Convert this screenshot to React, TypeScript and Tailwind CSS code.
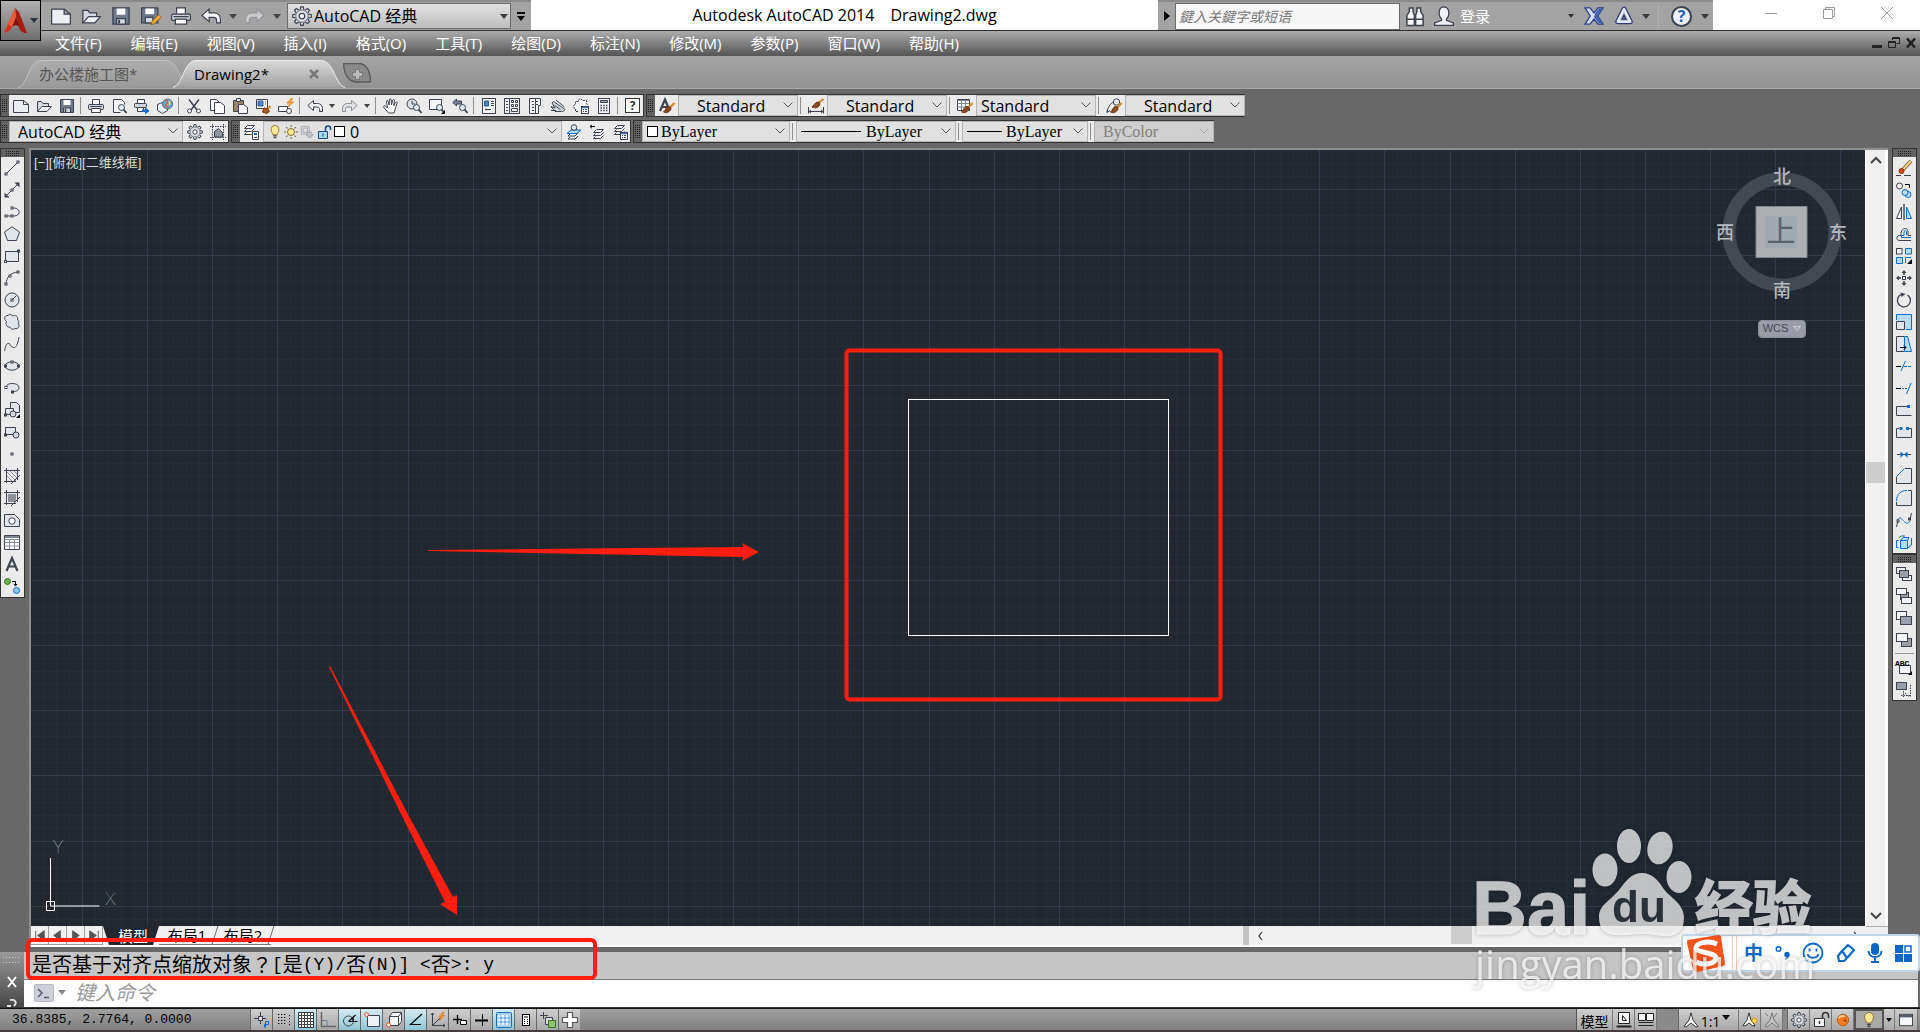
import React from 'react'

const INK = '#3c4250'
const BLUE = '#0a6ccf'
const SKY = '#b4dcf2'
const PALE = '#e2e5ea'

const node = (x: number, y: number) => <rect x={x - 1} y={y - 1} width="2" height="2" fill="#fff" />

const page = (x: number, y: number, w: number, h: number, fill = '#f4f5f7', stroke = INK) => (
  <rect x={x} y={y} width={w} height={h} fill={fill} stroke={stroke} />
)

const lens = (
  <>
    <circle cx="10.5" cy="9.5" r="3" fill="#dcebf2" />
    <path d="M12.7 11.7 15.5 15" strokeWidth="1.8" />
  </>
)

const brush = (
  <>
    <path d="M15.5 5 11 9.5" stroke="#d68a2e" strokeWidth="2.4" />
    <path d="M11.5 9 9 8.5C7 9.5 6.5 12.5 4.5 14c2.5 1.5 6 .5 7.5-3z" fill="#8a4a20" stroke="#6d3512" />
  </>
)

const layers = (x: number, y: number) => (
  <path d={`M${x + 3} ${y}h7l-3 3h-7zM${x + 2} ${y + 4}l-2 2h7l3-3M${x + 2} ${y + 7}l-2 2h7l3-3`} fill="#f4f5f7" />
)

const miniTable = (
  <>
    <rect x="8.5" y="8.5" width="7" height="7" fill="#fff" />
    <path d="M9 9.5h6" stroke="#3f6fb0" strokeWidth="1.5" />
    <path d="M10 11.5h1M12 11.5h2M10 13.5h1M12 13.5h2" />
  </>
)

const spokes = [0, 45, 90, 135, 180, 225, 270, 315]

const icons: Record<string, React.ReactNode> = {
  new: <path d="M.5 2.5h10l5 4v8H.5zM10.5 2.5v4h5" fill="#eceef1" />,
  open: (
    <>
      <path d="M1.5 13.5V3.5h4l1.5 2h5.5v3" fill="#d5d9e0" />
      <path d="M1.5 13.5 6 8.5h9.5l-4.500 5z" fill="#f2f4f6" />
    </>
  ),
  save: (
    <>
      <path d="M1.5 1.5h13v13h-13z" fill="#6f7a8c" />
      <path d="M4.5 2h7v5h-7z" fill="#fff" stroke="none" />
      <path d="M4.5 10h7v4.5h-7z" fill="#d5d9e0" />
      <path d="M6.5 11v3" strokeWidth="1.5" />
    </>
  ),
  saveas: (
    <>
      <path d="M.5 1.5h13v12H.5z" fill="#6f7a8c" />
      <path d="M3.5 2h7v4.5h-7z" fill="#fff" stroke="none" />
      <path d="M3.5 9h6v4.5h-6z" fill="#d5d9e0" />
      <path d="m8 15 1-3 5-5 2 2-5 5z" fill="#f2ac3c" stroke="#8a5a18" strokeWidth=".7" />
    </>
  ),
  print: (
    <>
      <path d="M4.5 6V1.5h7V6" fill="#fff" />
      <rect x=".5" y="6.5" width="15" height="5" rx="1" fill="#cfd3da" />
      <path d="M3.5 10.5h9v4h-9z" fill="#fff" />
      <path d="M2 8.5h12" />
    </>
  ),
  preview: <><path d="M9.5 14.5h-7v-13h8l3 3v2" fill="#fff" />{lens}</>,
  publish: (
    <>
      <path d="M3.5 5V1.5h7V5" fill="#fff" />
      <rect x=".5" y="5.5" width="12" height="4" rx="1" fill="#cfd3da" />
      <path d="M3.5 9.5h6v4h-6z" fill="#fff" />
      <path d="M8 11.5h3V9l4.5 4-4.5 3.500V14H8z" fill={BLUE} stroke="none" />
    </>
  ),
  globe: (
    <>
      <path d="m.5 6.5 5-2 5 2v6l-5 3-5-3z" fill="#f4f5f7" />
      <circle cx="10.5" cy="6" r="5" fill="#58b4e8" stroke="#5a6475" />
      <path d="M8 3c2-1.5 3 0 2.5 1.5S8 6 8.5 8c1 1 2.5 0 3 1.5" stroke="#e8582c" strokeWidth="1.5" />
      <path d="M12.5 3v4" stroke="#ffd23c" strokeWidth="1.8" />
    </>
  ),
  cut: (
    <>
      <path d="M3 1.5 11 12M13 1.5 5 12" strokeWidth="1.5" />
      <circle cx="3.5" cy="13" r="2" fill="#fff" />
      <circle cx="12.5" cy="13" r="2" fill="#fff" />
    </>
  ),
  copy: (
    <>
      <path d="M1.5 1.5h6l3 3v8h-9z" fill="#fff" />
      <path d="M5.5 4.5h6l4 3v8h-10z" fill="#fff" />
    </>
  ),
  paste: (
    <>
      <path d="M1.5 2.5h10v11h-10z" fill="#9a8468" />
      <path d="M4.5.5h4v3h-4z" fill="#e2e5ea" />
      <path d="M6.5 6.5h5l4 3v6h-9z" fill="#fff" />
    </>
  ),
  match: (
    <>
      <path d="M1.5 1.5h11v9h-11z" fill="#fff" />
      <path d="M3 3h5v5H3z" fill="#4c86c8" stroke="#2b5f9a" />
      <path d="M10 4h1M10 6h1" />
      <path d="m15.5 8-3 3" stroke="#d68a2e" strokeWidth="2" />
      <path d="M12.5 10.5 9 10l-1.5 4 4 1.5 3-2z" fill="#a85c20" stroke="#6d3512" />
    </>
  ),
  block: (
    <>
      <path d="M.5 8.5h9v5h-9z" fill="#fff" />
      <circle cx="11" cy="13" r="2.5" fill="#fff" />
      <path d="m13 .5-4 4.500h3l-2 4 5.500-5h-3l2-3.500z" fill="#ffb52e" stroke="#d87010" strokeWidth=".7" />
    </>
  ),
  undo: <path d="M.8 7.5 6.5 2.5v3h4c3 0 5 2 5 5v3h-3v-2c0-2-1-2.5-2.5-2.5H6.5v3.500z" fill="#f4f5f7" />,
  redo: <path d="M15.2 7.5 9.5 2.5v3h-4c-3 0-5 2-5 5v3h3v-2c0-2 1-2.5 2.5-2.5h3.500v3.500z" fill="#e2e4e7" stroke="#888c94" />,
  pan: <path d="M5.5 15 1 9.5c-1-1.5.5-2.5 1.500-1.500l2 2-1-6.500c0-1.500 1.500-1.500 1.700 0L6.200 7 6.400 2c0-1.600 1.700-1.600 1.800 0l.3 4.800 1.200-4.500c.5-1.300 2-.9 1.700.5l-.7 5 1.800-3.300c.8-1 2-.3 1.600.8L12 11.500l-1 3.500z" fill="#fff" />,
  zoomrt: <><circle cx="6" cy="6" r="5" fill="#dce1e8" /><path d="M6 3v3h3" />{lens}</>,
  zoomwin: <><path d="M.5 1.5h12v10H.5z" fill="#f4f5f7" />{lens}<path d="M16 12v4h-4z" fill="#000" stroke="none" /></>,
  zoomprev: <><path d="M.8 4.5 4.5 1v2h5v3h-5v2z" fill="#7d8694" />{lens}</>,
  props: (
    <>
      {page(1.5, 0.5, 13, 15)}
      <path d="M3.5 3h4v5h-4z" fill="#3f86cc" stroke="#2b5f9a" />
      <path d="M10 3.5h3M10 5.5h3M10 7.5h3M4 11.5h6M5 10.5v2" />
    </>
  ),
  design: (
    <>
      {page(0.5, 0.5, 15, 15)}
      <path d="M5.5 1v14M2 3.5h2M2 6.5h2M2 9.5h2M2 12.5h2" />
      <path d="M7.5 2.5h2v2h-2zM11.5 2.5h2v2h-2zM7.5 6.5h2v2h-2zM11.5 6.5h2v2h-2zM7.5 10.5h6v3h-6z" />
    </>
  ),
  palette: (
    <>
      <path d="M2.5.5h11v7h-2v8h-9z" fill="#f4f5f7" />
      <path d="M5 3.5h2M9 3.5h2M5 6.5h2M9 6.5h2M5 9.5h2M5 12.5h2M8.5 1v14" />
    </>
  ),
  sheet: (
    <>
      <path d="M1 8.500 5 10 2 5l1.500-1.500L14.500 11c1 1-1 2.500-3 2.500H5z" fill="#d5d9e0" />
      <path d="m6 2 8.500 7M1 12.500h5M4.500 7.500l6 4" />
    </>
  ),
  markup: (
    <>
      <path d="M5 13.5H2.5v-3a2 2 0 0 1 0-4v-3h3a2 2 0 0 1 4-1h4v3a2 2 0 0 1 1 2" strokeDasharray="2 1" fill="#f4f5f7" />
      {miniTable}
    </>
  ),
  calc: (
    <>
      {page(2.5, 0.5, 11, 15)}
      <path d="M4.5 2.5h7v2h-7z" fill="#9ba3b0" />
      <path d="M4.5 7.5h7M4.5 10h7M4.5 12.5h7" strokeDasharray="1.5 1.2" strokeWidth="1.5" />
    </>
  ),
  textstyle: <><path d="M1 13 6 1.5 10 11M2.8 9h6" strokeWidth="2.2" />{brush}</>,
  dimstyle: (
    <>
      <path d="M.5 9v6.5M15.5 9v6.5M1 13.5h14M3 12l-2 1.5 2 1.5M13 12l2 1.5-2 1.5" />
      <path d="m15.5 1-5 4" stroke="#d68a2e" strokeWidth="2" />
      <path d="M11 4 8 4.5 4 9c3 1.5 7 1 8-3z" fill="#8a4a20" stroke="#6d3512" />
    </>
  ),
  tablestyle: <><path d="M.5 1.5h12v11H.5z" fill="#fff" /><path d="M.5 2.5h12M.5 5.5h12M.5 9h12M4.5 3v9M8.5 3v9" stroke="#7d8694" />{brush}</>,
  leaderstyle: <><path d="M1 14.5C2 9 4 6 7.5 4M1 14.5 1.5 11M1 14.5l3-2" /><circle cx="10.5" cy="4" r="3.2" fill="#e8ecf2" />{brush}</>,
  gear: (
    <>
      {spokes.map((a) => (
        <path key={a} d="M6.5 3 7 .6h2L9.5 3" fill="#dfe2e8" transform={`rotate(${a} 8 8)`} />
      ))}
      <circle cx="8" cy="8" r="5" fill="#dfe2e8" stroke="#7d8592" />
      <circle cx="8" cy="8" r="2.2" fill="#fff" />
    </>
  ),
  workspace: (
    <>
      <path d="M2.5 0v16M13.5 0v16M0 2.5h16M0 13.5h16" strokeDasharray="1.5 1" />
      <path d="M4.5 13V7.5l4-3 4 4V13z" fill="#8d95a2" />
    </>
  ),
  layerprops: <>{layers(0.5, 1.5)}<path d="M8.5 7.5h6v8h-6z" fill="#fff" /><path d="M10 10h3" stroke={BLUE} strokeWidth="2" /><path d="M10 13.5h3" /></>,
  bulb: (
    <>
      <path d="M5.5 11C5.5 9 3.5 8 3.5 5a4.500 4.500 0 0 1 9 0c0 3-2 4-2 6z" fill="#ffe794" stroke="#8b7338" />
      <path d="M6 12.5h4M6.5 14.5h3" stroke="#444" strokeWidth="1.5" />
    </>
  ),
  sun: (
    <g stroke="#7a6a3c">
      <circle cx="8" cy="8" r="3.5" fill="#ffe48a" />
      {spokes.map((a) => (
        <path key={a} d="M8 3V1" transform={`rotate(${a} 8 8)`} />
      ))}
    </g>
  ),
  freeze: (
    <g stroke="#a4a6aa">
      <path d="M1.5 1.5h9v9h-9zM3.5 3.5h5v5h-5z" />
      <circle cx="11" cy="11" r="3" fill="#c4c6ca" strokeDasharray="1.5 1" strokeWidth="2" />
    </g>
  ),
  unlock: (
    <>
      <path d="M9.5 7V4.5a2.5 2.5 0 0 1 5 0V6" stroke="#1d4e7a" strokeWidth="1.5" />
      <path d="M2.5 7.5h9v7h-9z" fill="#a6d8f2" stroke="#1d4e7a" />
      <path d="M7 9.5v3" stroke="#1d4e7a" />
    </>
  ),
  layermake: (
    <>
      {layers(2, 6)}
      <path d="M5 6h10l-4 3.500H1z" fill={SKY} stroke={BLUE} />
      <circle cx="8" cy="3.5" r="2.800" fill="#dfe4ea" />
    </>
  ),
  layerprev: <>{layers(4.5, 5.5)}<path d="M1 2.5h5M3 .8 1 2.5l2 1.8" stroke="#000" /></>,
  layerstate: <>{layers(2.5, 1.5)}{miniTable}</>,
  line: <><path d="M2 14 14 2" />{node(2, 14)}{node(14, 2)}</>,
  xline: <><path d="M2 14 14 2" /><path d="M15.500.5v5l-5-5zM.5 15.5v-5l5 5z" fill={INK} stroke="none" />{node(8, 8)}</>,
  pline: <><path d="M2 12h8c7 0 7-8-1-8" />{node(2, 12)}{node(8, 12)}{node(8, 4)}</>,
  polygon: <path d="M8 .8 15.5 6l-3 8.500h-9L.5 6z" fill={PALE} />,
  rect: <><path d="M1.5 3.5h13v10h-13z" fill={PALE} />{node(14.5, 3)}{node(1.5, 13.5)}</>,
  arc: <><path d="M2 14C2.5 7 7 2.5 14 2" />{node(2, 14)}{node(6, 6)}{node(14, 2)}</>,
  circle: <><circle cx="8" cy="8" r="7" fill={PALE} /><path d="m8 8 4-4" />{node(8, 8)}</>,
  cloud: <path d="M2.5 7.5C-.5 5.5.5 1 4 1.500 5-.5 8 .5 8.500 2c2.500-1.500 6 0 5 4 2 1 1.500 2.500.5 3 2.500 3 0 6.500-3 5.500-2 1.500-4.500.5-5-1.500-3.500.5-4.500-2.500-3.500-5.500z" fill={PALE} />,
  spline: <path d="M.8 15C1 9 4 5 6.5 9S13 14 15 1" />,
  ellipse: <><ellipse cx="8" cy="8" rx="7" ry="4.2" fill={PALE} />{node(1.5, 8)}{node(8, 4)}{node(14.5, 8)}</>,
  earc: <><path d="M2 7C3 2 14 2.5 15 7c.5 3.500-4 5-7 4.500" fill={PALE} />{node(2, 7.5)}{node(8.5, 12)}</>,
  insert: (
    <>
      <path d="M6.5 6V.5h6l3 3v7h-4" fill={PALE} />
      <path d="M1.5 6.5h8v6h-8z" fill={PALE} />
      <circle cx="9" cy="12" r="3" fill="#d5d9e0" />
      {node(1.5, 13)}
      <path d="M16 12v4h-4z" fill="#000" stroke="none" />
    </>
  ),
  mkblock: <><path d="M1.5 3.5h10v7h-10z" fill={PALE} /><circle cx="12" cy="11" r="3" fill="#d5d9e0" />{node(1.5, 11)}</>,
  point: node(8, 8),
  hatch: (
    <>
      <path d="M2.5 0v15M13.5 0v12M0 2.5h16M0 13.5h12" />
      <path d="m3 4 9 9M3 8l5 5M6 3l7 7M10 3l3 3" strokeWidth=".5" />
      <path d="m7 16 9-9" />
    </>
  ),
  gradient: <><path d="M4 4h8v8H4z" fill="#8a909a" stroke="none" /><path d="M2.5 0v15M13.5 0v12M0 2.5h16M0 13.5h12M7 16l9-9" /></>,
  region: <><path d="M.5 2.5h10l5 5v7H.5z" fill={PALE} /><circle cx="8" cy="9" r="3.2" fill="#fff" /></>,
  table: (
    <>
      <path d="M.5 1.5h15v14H.5z" fill="#fff" />
      <path d="M1 3h14" stroke="#7d8694" strokeWidth="2" />
      <path d="M.5 5.5h15M.5 8.5h15M.5 12h15M5.5 5v10M10.5 5v10" stroke="#8b919c" />
    </>
  ),
  mtext: <path d="M2.5 15 8 2l5.5 13M4.5 10.5h7" strokeWidth="2.2" />,
  addsel: (
    <>
      <circle cx="3.5" cy="3.5" r="3" fill="#6fae4a" stroke="#3b7220" />
      <circle cx="12.5" cy="12.5" r="3" fill="#8cc8f0" stroke={BLUE} />
      <path d="M8 3.5h3.5v4M10 6l1.5 2L13 6" stroke="#000" />
    </>
  ),
  erase: (
    <>
      <path d="m15 1-8 8.500" stroke="#8a6a34" strokeWidth="4" />
      <path d="m15 1-8 8.500" stroke="#f0d08c" strokeWidth="2" />
      <circle cx="5.5" cy="11" r="2.5" fill="#d84a1c" stroke="#8c2c0c" />
      <path d="M0 15.5h5M8 15.5h7" />
    </>
  ),
  dup: (
    <>
      <circle cx="3.5" cy="4" r="3" fill="#f4f5f7" />
      <path d="M9 2.5h4.500V6" stroke="#000" />
      <circle cx="12" cy="12.5" r="3" fill={SKY} stroke={BLUE} />
      <circle cx="9" cy="10.5" r="3" fill={SKY} stroke={BLUE} />
    </>
  ),
  mirror: <><path d="M5.5 3v11.500h-5z" fill="#f4f5f7" /><path d="M8 0v16" stroke="#000" /><path d="M10.5 3v11.500h5z" fill={SKY} stroke={BLUE} /></>,
  offset: <><path d="M15 14.5H3c-4-1-2-6 2-5C4 2 12 0 12 6v3.500h3" /><path d="M15 11.5H5.5V9.5H8V6c.5-2 2.500-2 2.500 0v3" stroke={BLUE} /></>,
  array: (
    <>
      <rect x=".5" y=".5" width="5.5" height="5.5" fill="#fff" />
      <path d="M9.500.5h6V6h-6zM.5 9.5h6v6h-6z" fill={SKY} stroke={BLUE} />
      <path d="M9.5 15V9.5H15" stroke={BLUE} />
      <path d="M16 11v5h-5z" fill="#000" stroke="none" />
    </>
  ),
  move: (
    <>
      <path d="M8 0 10.500 3h-5zM8 16l2.500-3h-5zM0 8l3-2.500v5zM16 8l-3-2.500v5z" fill={INK} stroke="none" />
      <path d="M8 3v2M8 11v2M3 8h2M11 8h2" strokeWidth="1.5" />
      <rect x="6.5" y="6.5" width="3" height="3" fill="#fff" />
    </>
  ),
  rotate: <><path d="M6 2.2A6.5 6.5 0 1 0 11.5 3" strokeWidth="1.3" /><path d="m4.500.5 5 1.500-4 3z" fill={INK} stroke="none" /></>,
  scale: <><path d="M.5 6V.5h15v15H10" fill={SKY} stroke={BLUE} /><path d="M.5 7.5h8v8h-8z" fill={PALE} /></>,
  stretch: (
    <>
      <path d="M8.500.5h3l4 15h-7z" fill={SKY} stroke={BLUE} />
      <path d="M8 .5H.5v15H8" fill={PALE} />
      <path d="M4 11.5h6M8 9.5l2 2-2 2" stroke="#000" />
    </>
  ),
  trim: <><path d="M0 8.5h5" stroke="#000" /><path d="M5 13 9.5 3" stroke={BLUE} /><path d="M8 8.5h8" stroke={BLUE} strokeDasharray="3 1" /></>,
  extend: <><path d="M0 8.5h5" stroke="#000" /><path d="M6 8.5h5" stroke={BLUE} strokeDasharray="2 1" /><path d="M10.5 14 15 3" stroke={BLUE} /></>,
  breakpt: <><path d="M15.5 13.5H.5v-9h11" fill={PALE} /><path d="M11 3h3v3h-3z" fill={BLUE} stroke="none" /></>,
  brk: <><path d="M3 4.5H.5v9h15v-9H13" fill={PALE} /><path d="M3.5 3h3v3h-3zM10 3h3v3h-3z" fill={BLUE} stroke="none" /></>,
  join: <><path d="M1 8.5h14" /><path d="M4.5 5.5 8 8.5l-3.500 3zM11.5 5.5 8 8.5l3.500 3z" fill={BLUE} stroke="none" /></>,
  chamfer: <><path d="M9 .5h6.500v15H.5V9" fill={PALE} /><path d="M.5 8.5 8.500.5" stroke={BLUE} /></>,
  fillet: <><path d="M12 .5h3.500v15H.5V12" fill={PALE} /><path d="M.5 11C.5 4 5 .5 11 .5" stroke={BLUE} /></>,
  blend: <><path d="M.5 15 2 8M14 8l1.500-7" /><path d="M2 8c3-8 7 9 12 1" stroke={BLUE} />{node(2, 9)}{node(13.5, 7)}</>,
  explode: (
    <>
      <path d="M4.5 6.5h7v8h-7zM4.5 6.5l2.500-3h6l-1.500 3M12 14l3.500-3V4" fill={SKY} stroke={BLUE} />
      <path d="M2.5 6.5h-2v7h2M3 3.5 5.5 2H9" stroke={BLUE} />
    </>
  ),
  front: <>{page(0.5, 1.5, 9, 6)}{page(6.5, 9.5, 9, 5)}{page(3.5, 4.5, 9, 7, '#9aa0aa')}</>,
  back: <>{page(4.5, 4.5, 8, 7, '#9aa0aa')}{page(0.5, 0.5, 10, 6)}{page(5.5, 9.5, 10, 6)}</>,
  above: <>{page(0.5, 1.5, 10, 8)}{page(4.5, 6.5, 11, 8, '#9aa0aa')}</>,
  under: <>{page(5.5, 6.5, 10, 8, '#9aa0aa')}{page(0.5, 1.5, 11, 8)}</>,
  textfront: (
    <>
      <path d="M3.5 6.5h11v8h-11z" fill="#f4f5f7" />
      <text x="-1" y="7" fontSize="8" fontWeight="bold" fill="#000" stroke="none" fontFamily="Liberation Mono, monospace">ABC</text>
      <path d="M16 12v4h-4z" fill="#000" stroke="none" />
    </>
  ),
  hatchback: <><path d="M5 14.5h10M7.5 10v6M14.5 4v12M9 12l4 4" strokeDasharray="1.5 1" />{page(0.5, 1.5, 10, 7, '#9aa0aa')}</>,
  infer: (
    <>
      <path d="M0 6.5h12M6.5 0v12" />
      <rect x="4.5" y="4.5" width="4" height="4" fill="#ddd" />
      <path d="M10.5 15.5v-3h4v-3h-3v6" stroke={BLUE} />
    </>
  ),
  snap: <path d="M2 2.5h9M2 5.5h9M2 8.5h9M2 11.5h9M13.5 3v10" strokeDasharray="1.3 1.7" stroke="#000" />,
  grid: (
    <>
      <path d="M.5.5h15v15H.5z" fill="#fff" stroke="#333" />
      <path d="M3.5 0v16M6.5 0v16M9.5 0v16M12.5 0v16M0 3.5h16M0 6.5h16M0 9.5h16M0 12.5h16" stroke="#444" />
    </>
  ),
  ortho: <><path d="M1.5 0v14.500H16" stroke="#666" strokeWidth="1.5" /><path d="M2 8.5h5v6" stroke="#6d7fa0" /></>,
  polar: <><circle cx="6.5" cy="9" r="5" /><path d="M6.5 9.5h9M6.5 9.5 13.500 3M11 5v4" stroke="#000" strokeWidth="1.2" /></>,
  osnap: <><path d="M3.5 3.5h12v11h-12z" fill="#eef2f6" /><circle cx="2.5" cy="2.5" r="2" fill="#fff" stroke="#e0561c" /></>,
  osnap3d: (
    <>
      <path d="m3.5 4.5 3-4h9v9l-3 4h-9zM3.5 4.5h9v9M12.5 4.5l3-4" fill="#f4f5f7" />
      <circle cx="2.5" cy="13" r="2" fill="#fff" stroke="#e0561c" />
    </>
  ),
  otrack: <path d="M14 2 2.5 12.5H13" stroke="#000" strokeWidth="1.2" />,
  ducs: (
    <>
      <path d="M2.5 1v12.500H15M2.5 13.5 10 6M1 3l1.5-2L4 3M13 12l2 1.5-2 1.5" />
      <path d="m13 0-4 4.500h2l-1.500 4 5-5h-2.500l2-3.500z" fill="#ffa52e" stroke="#c86010" strokeWidth=".6" />
    </>
  ),
  dyn: <><path d="M1 7.5h9M5.5 3v9" stroke="#000" strokeWidth="1.3" /><path d="M8.5 8.5h6v4h-6z" fill="#fff" stroke="#000" /></>,
  lwt: <><path d="M1 8.5h13" stroke="#000" strokeWidth="2" /><path d="M8.5 2v12" stroke="#000" /></>,
  transp: (
    <>
      <rect x=".5" y=".5" width="15" height="15" rx="1" fill="#a8d2ee" stroke="#1c6ab4" />
      <path d="M2 4h12M2 8h12M2 12h12" stroke="#e8f4fc" strokeWidth="2" strokeDasharray="2 2" />
      <path d="M4 6h10M4 10h10" stroke="#6fb0de" strokeWidth="2" strokeDasharray="2 2" />
    </>
  ),
  qp: (
    <>
      <rect x="4.5" y="2.5" width="7" height="11" fill="#fff" stroke="#000" />
      <path d="M6 5h4M6 7.5h1M9 7.5h1M6 9.5h1M9 9.5h1M6 11.5h1M9 11.5h1" stroke="#000" />
    </>
  ),
  cycle: (
    <>
      <path d="M0 3.5h8M3.5 0v7" />
      <path d="M5.5 5.5h7v7h-7z" fill="#ddd" />
      <path d="M8.5 8.5h7v7h-7z" fill="#8fc46a" stroke="#2e7420" />
    </>
  ),
  monitor: <path d="M5.500.5h5v5h5v5h-5v5h-5v-5h-5v-5h5z" fill="#fff" stroke="#555" strokeWidth="1.2" />,
  layoutA: (
    <>
      <path d="M2.500.5h11v11h-11z" fill="#f4f5f7" stroke="#222" />
      <path d="M6.5 3.5v5h4z" stroke="#222" />
      <path d="M.5 14.5h15" stroke="#222" strokeWidth="2" />
    </>
  ),
  layoutB: (
    <>
      <path d="M.5 1.5h7v7h-7zM8.5 1.5h7v7h-7z" fill="#f4f5f7" stroke="#222" />
      <path d="M.5 13.5h15M.5 10.5h15" stroke="#222" strokeWidth="1.2" />
    </>
  ),
  anno: <path d="M8 .8 10 8l5 6.500-2 .5-5-4-5 4-2-.5L6 8z" fill="#fff" stroke="#333" />,
  annovis: (
    <>
      <path d="M7 .8 9 8l4 5.500-2 .5-4-3-4 3-2-.5L5 8z" fill="#fff" stroke="#333" />
      <circle cx="12.5" cy="8.5" r="2.5" fill="#ffdc50" stroke="#e89018" />
      <path d="M12.5 12v3" stroke="#555" />
    </>
  ),
  annoauto: <path d="M8 .8 10 8l5 6.500-2 .5-5-4-5 4-2-.5L6 8zM1 1l3 3M13 1l-3 4" fill="#c4c4c4" stroke="#777" />,
  tray: (
    <>
      <path d="M9.5 6V3.5a3 3 0 0 1 6 0V6" stroke="#333" strokeWidth="1.5" />
      <path d="M1.5 6.5h10v8h-10z" fill="#f4f5f7" stroke="#333" />
      <path d="M6.5 9v3" stroke="#333" strokeWidth="1.5" />
    </>
  ),
  ball: (
    <>
      <circle cx="8" cy="8" r="6.5" fill="#ef7f1e" stroke="#b95408" />
      <path d="M3 6c2-3 5-3 7-2" stroke="#ffd29a" strokeWidth="2" />
      <path d="m10 6 2 4-4-2" stroke="#8c3c04" />
    </>
  ),
  clean: <><rect x=".5" y="1.5" width="15" height="13" fill="#f4f5f7" stroke="#333" /><path d="M1 3.5h14" stroke="#555e6c" strokeWidth="3" /></>,
  find: <path d="M3.5 1.5h3v3l1 3v8h-6v-8l2-3zM9.5 1.5h3v3l2 3v8h-6v-8l1-3zM1.5 10.5h6M8.5 10.5h6" fill="#f4f5f7" strokeWidth="1.2" />,
  user: <path d="M8 .8c5 0 4.500 7.500 2 9.200v1.500l5.500 2v2H.5v-2L6 11.500V10C3.5 8.300 3 .8 8 .8z" fill="#eef1f5" />,
  exchange: (
    <>
      <path d="M.8 1.5h4L8 5.500l3.200-4h4L11 8l4.200 6.500h-4L8 10.500l-3.200 4h-4L5 8z" fill="#d9e0f4" stroke="#2a3f86" />
      <path d="M9 5.500 12 2h2.500L10.500 8l4 6H12L8 9z" fill="#3f5fb4" stroke="none" />
    </>
  ),
  a360: (
    <>
      <path d="M8 2.500 3 12.500h10z" stroke="#2c3c70" strokeWidth="4" strokeLinejoin="round" />
      <path d="M8 2.500 3 12.500h10z" stroke="#e4eaf6" strokeWidth="2" strokeLinejoin="round" fill="#a3a3a3" />
      <path d="M8 7.500 6.500 10.500h3z" fill="#8fa0c8" stroke="#2c3c70" />
    </>
  ),
}

function Icon({ name, className = 'h-4 w-4' }: { name: string; className?: string }) {
  return (
    <svg viewBox="0 0 16 16" className={`shrink-0 overflow-visible ${className}`} fill="none" stroke={INK} aria-hidden="true">
      {icons[name]}
    </svg>
  )
}

const Caret = ({ className = 'text-[#3a3a3a]' }: { className?: string }) => (
  <svg viewBox="0 0 8 5" className={`h-[5px] w-2 shrink-0 ${className}`} aria-hidden="true"><path d="M0 0h8L4 5z" fill="currentColor" /></svg>
)

const HGrip = () => (
  <div className="flex w-[9px] shrink-0 items-center justify-center bg-[#626262]">
    <svg viewBox="0 0 5 14" className="h-[14px] w-[5px]" stroke="#1c1c1c" strokeDasharray="1 1" aria-hidden="true"><path d="M.5 0v14M2.500 0v14M4.500 0v14" /></svg>
  </div>
)

const VGrip = () => (
  <div className="flex h-2 shrink-0 items-center justify-center bg-[#626262]">
    <svg viewBox="0 0 14 5" className="h-[5px] w-[14px]" stroke="#1c1c1c" strokeDasharray="1 1" aria-hidden="true"><path d="M0 .5h14M0 2.500h14M0 4.500h14" /></svg>
  </div>
)

function ToolStrip({ label, children }: { label: string; children: React.ReactNode }) {
  return (
    <div role="toolbar" aria-label={label} className="flex h-[23px] bg-[#ebebeb] outline outline-1 -outline-offset-1 outline-[#333]">
      <HGrip />
      {children}
    </div>
  )
}

// '|' draws a separator and 'v' a small drop-down arrow
function Tools({ names }: { names: string[] }) {
  return (
    <>
      {names.map((name, i) => {
        if (name === '|') {
          return <div key={i} className="my-[3px] ml-[2px] mr-[3px] w-px shrink-0 bg-[#8e8e8e]" />
        }
        if (name === 'v') {
          return (
            <button key={i} aria-label="more" className="flex w-3 items-center justify-center">
              <svg viewBox="0 0 6 4" className="h-1 w-[6px]" aria-hidden="true"><path d="M0 0h6L3 4z" fill="#444" /></svg>
            </button>
          )
        }
        if (name === 'help') {
          return (
            <button key={i} aria-label="help" className="flex w-[23px] items-center justify-center">
              <span className="flex h-[15px] w-[15px] items-center justify-center border border-[#333] bg-white text-xs font-bold text-[#333]">?</span>
            </button>
          )
        }
        return <button key={i} aria-label={name} className="flex w-[23px] shrink-0 items-center justify-center"><Icon name={name} /></button>
      })}
    </>
  )
}

type ComboProps = {
  label: string
  value: string
  width: string
  text: string
  lead?: React.ReactNode
  disabled?: boolean
}

function Combo({ label, value, width, text, lead, disabled }: ComboProps) {
  return (
    <div className={`relative my-px shrink-0 border border-[#b4b4b4] ${disabled ? 'bg-[#cfcfcf] text-[#808080]' : 'bg-[#e1e1e1] text-black'} ${width}`}>
      <select aria-label={label} disabled={disabled} className={`block h-[19px] w-full appearance-none bg-transparent text-base leading-[18px] outline-none ${text}`}>
        <option>{value}</option>
      </select>
      {lead && <div className="pointer-events-none absolute inset-y-0 left-1 flex items-center">{lead}</div>}
      <svg viewBox="0 0 10 6" className="pointer-events-none absolute right-1 top-[6px] h-[6px] w-[10px]" fill="none" stroke={disabled ? '#aaa' : '#555'}>
        <path d="m.5.5 4.500 4.500L9.500.5" />
      </svg>
    </div>
  )
}

function TitleBar() {
  return (
    <header className="flex h-[31px] border-b border-[#2c2c2c] bg-white">
      <div className="flex items-center border-t-2 border-[#8a8a8a] bg-[#a3a3a3] pl-[46px]">
        {['new', 'open', 'save', 'saveas', 'print', 'undo'].map((name) => (
          <button key={name} aria-label={name} className="flex w-[30px] justify-center"><Icon name={name} className="h-5 w-5" /></button>
        ))}
        <button aria-label="undo list" className="flex w-[14px] justify-center"><Caret className="text-[#444]" /></button>
        <button aria-label="redo" className="flex w-[30px] justify-center opacity-60"><Icon name="redo" className="h-5 w-5" /></button>
        <button aria-label="redo list" className="mr-[3px] flex w-[14px] justify-center"><Caret className="text-[#444]" /></button>
        <div className="relative h-[26px] w-[224px] border border-[#6a6a6a] bg-linear-to-b from-[#e2e2e2] to-[#bdbdbd]">
          <select aria-label="工作空间" className="block h-6 w-full appearance-none bg-transparent pl-[26px] text-base leading-6 outline-none">
            <option>AutoCAD 经典</option>
          </select>
          <div className="pointer-events-none absolute inset-y-0 left-1 flex items-center"><Icon name="gear" className="h-5 w-5" /></div>
          <div className="pointer-events-none absolute inset-y-0 right-[2px] flex items-center"><Caret /></div>
        </div>
        <button aria-label="自定义" className="flex w-5 flex-col items-center gap-[2px]">
          <span className="h-[2px] w-2 bg-black" />
          <Caret className="text-black" />
        </button>
      </div>

      <div className="flex flex-1 items-center justify-center pb-1 pt-1 text-base text-black">
        <h1 className="mr-4">Autodesk AutoCAD 2014</h1>
        <span>Drawing2.dwg</span>
      </div>

      <div className="flex w-[555px] items-center border-t-2 border-[#8a8a8a] bg-[#a3a3a3]">
        <button aria-label="折叠" className="flex h-full w-[17px] items-center justify-center">
          <svg viewBox="0 0 6 10" className="h-[10px] w-[6px]"><path d="M0 0v10l6-5z" /></svg>
        </button>
        <input aria-label="搜索" placeholder="鍵入关鍵字或短语" className="h-[27px] w-[225px] border border-[#6a6a6a] bg-[#f7f7f7] px-[3px] text-sm italic outline-none placeholder:text-[#777]" />
        <button aria-label="查找" className="ml-1 flex w-[22px] justify-center"><Icon name="find" className="h-5 w-5" /></button>
        <button className="ml-2 flex items-center gap-[6px] text-[15px] text-white">
          <Icon name="user" className="h-5 w-5" />
          登录
        </button>
        <div className="flex-1" />
        <svg viewBox="0 0 6 4" className="h-1 w-[6px]" aria-hidden="true"><path d="M0 0h6L3 4z" fill="#333" /></svg>
        <button aria-label="exchange" className="ml-[10px]"><Icon name="exchange" className="h-5 w-5" /></button>
        <button aria-label="a360" className="ml-[10px] flex items-center gap-2"><Icon name="a360" className="h-5 w-5" /><Caret /></button>
        <div className="ml-2 h-6 w-px bg-[#b0b0b0]" />
        <button aria-label="帮助" className="ml-3 flex items-center gap-[9px]">
          <span className="flex h-[21px] w-[21px] items-center justify-center rounded-full border-2 border-[#39404e] bg-[#eef2f8] text-base font-bold leading-none text-[#1e5fc0]">?</span>
          <Caret />
        </button>
        <div className="w-1" />
      </div>

      <div className="flex w-[207px] items-center justify-end pb-1 text-[#999]">
        <button aria-label="最小化" className="flex w-[58px] justify-center"><span className="h-px w-3 bg-[#999]" /></button>
        <button aria-label="还原" className="flex w-[58px] justify-center">
          <svg viewBox="0 0 12 12" className="h-3 w-3" fill="none" stroke="currentColor"><path d="M.5 2.5h9v9h-9zM2.5 2.5v-2h9v9h-2" /></svg>
        </button>
        <button aria-label="关闭" className="mr-1 flex w-[58px] justify-center">
          <svg viewBox="0 0 12 12" className="h-3 w-3" fill="none" stroke="currentColor"><path d="m0 0 12 12M12 0 0 12" /></svg>
        </button>
      </div>
    </header>
  )
}

const menus = ['文件(F)', '编辑(E)', '视图(V)', '插入(I)', '格式(O)', '工具(T)', '绘图(D)', '标注(N)', '修改(M)', '参数(P)', '窗口(W)', '帮助(H)']

function MenuBar() {
  return (
    <nav className="flex h-[25px] items-center justify-between bg-linear-to-b from-[#adadad] to-[#555] pb-[2px] pl-[55px] pr-1">
      <div className="flex gap-[29px]">
        {menus.map((m) => (
          <button key={m} className="text-[15px] leading-5 text-white">{m}</button>
        ))}
      </div>
      <div className="flex items-center gap-[6px]">
        <span className="flex h-[11px] items-end"><button aria-label="最小化图形" className="h-[3px] w-[10px] bg-[#222]" /></span>
        <button aria-label="还原图形">
          <svg viewBox="0 0 12 11" className="h-[11px] w-3" fill="none" stroke="#222"><path d="M.5 4.5h7v6h-7zM.5 5.5h7M4.5 3V.5h7v6h-3M4.5 1.5h7" /></svg>
        </button>
        <button aria-label="关闭图形">
          <svg viewBox="0 0 10 10" className="h-[10px] w-[10px]" stroke="#222" strokeWidth="2.5"><path d="m1 .5 8 9M9 .5l-8 9" /></svg>
        </button>
      </div>
    </nav>
  )
}

function TabShape({ active }: { active?: boolean }) {
  return (
    <svg viewBox="0 0 172 28" preserveAspectRatio="none" className="absolute inset-0 h-full w-full" aria-hidden="true">
      <defs>
        <linearGradient id="tabActive" x2="0" y2="1"><stop stopColor="#d8d8d8" /><stop offset="1" stopColor="#a2a2a2" /></linearGradient>
        <linearGradient id="tabIdle" x2="0" y2="1"><stop stopColor="#adadad" /><stop offset="1" stopColor="#9a9a9a" /></linearGradient>
      </defs>
      <path d="M0 27.5C10 25 11 .5 23 .5h125C161 .5 162 25 172 27.5" fill={active ? 'url(#tabActive)' : 'url(#tabIdle)'} stroke={active ? '#efefef' : '#c2c2c2'} />
    </svg>
  )
}

function FileTabs() {
  return (
    <div className="flex h-[33px] items-end border-b border-[#a8a8a8] bg-linear-to-b from-[#a5a5a5] to-[#929292] pl-[18px]">
      <button className="relative h-7 w-[172px] pl-[21px] text-left text-[15px] text-[#555]">
        <TabShape />
        <span className="relative">办公楼施工图*</span>
      </button>
      <div className="relative z-10 -ml-[17px] flex h-7 w-[172px] items-center pl-[21px] text-[15px] text-black">
        <TabShape active />
        <button className="relative flex-1 text-left">Drawing2*</button>
        <button aria-label="关闭选项卡" className="relative mr-[26px]">
          <svg viewBox="0 0 10 10" className="h-[10px] w-[10px]" stroke="#777" strokeWidth="2.5"><path d="m1 1 8 8M9 1 1 9" /></svg>
        </button>
      </div>
      <button aria-label="新建选项卡" className="mb-[5px] -ml-[2px]">
        <svg viewBox="0 0 28 20" className="h-5 w-7" fill="#8a8a8a" stroke="#5c5c5c">
          <path d="M.5.5h15c7 0 12 6 12 18.500H14C6 19 1 12 .5.5z" strokeWidth="1.5" />
          <path d="M12.5 6.5h4v3h3v4h-3v3h-4v-3h-3v-4h3z" fill="#b9b9b9" stroke="#777" />
        </svg>
      </button>
    </div>
  )
}

function Toolbars() {
  return (
    <div className="flex flex-col gap-[3px] pb-[5px] pt-[5px]">
      <div className="flex gap-[2px]">
        <ToolStrip label="标准">
          <Tools names={['new', 'open', 'save', '|', 'print', 'preview', 'publish', 'globe', '|', 'cut', 'copy', 'paste', 'match', 'block', '|', 'undo', 'v', 'redo', 'v', '|', 'pan', 'zoomrt', 'zoomwin', 'zoomprev', '|', 'props', 'design', 'palette', 'sheet', 'markup', 'calc', '|', 'help']} />
        </ToolStrip>
        <ToolStrip label="样式">
          <Tools names={['textstyle']} />
          <Combo label="文字样式" value="Standard" width="w-[120px]" text="pl-[18px]" />
          <Tools names={['|', 'dimstyle']} />
          <Combo label="标注样式" value="Standard" width="w-[120px]" text="pl-[18px]" />
          <Tools names={['|', 'tablestyle']} />
          <Combo label="表格样式" value="Standard" width="w-[120px]" text="pl-1" />
          <Tools names={['|', 'leaderstyle']} />
          <Combo label="多重引线样式" value="Standard" width="w-[120px]" text="pl-[18px]" />
        </ToolStrip>
      </div>
      <div className="flex gap-[2px]">
        <ToolStrip label="工作空间">
          <Combo label="工作空间" value="AutoCAD 经典" width="w-[174px]" text="pl-2" />
          <Tools names={['gear', 'workspace']} />
        </ToolStrip>
        <ToolStrip label="图层">
          <Tools names={['layerprops']} />
          <Combo
            label="图层"
            value="0"
            width="w-[299px]"
            text="pl-[86px]"
            lead={
              <>
                <Icon name="bulb" className="h-[14px] w-[14px]" />
                <Icon name="sun" className="ml-px h-4 w-4" />
                <Icon name="freeze" className="ml-px h-[14px] w-[14px]" />
                <Icon name="unlock" className="ml-[2px] h-4 w-4" />
                <span className="ml-[2px] h-[11px] w-[11px] border border-black bg-white" />
              </>
            }
          />
          <Tools names={['layermake', 'layerprev', 'layerstate']} />
        </ToolStrip>
        <ToolStrip label="特性">
          <Combo label="颜色" value="ByLayer" width="w-[148px]" text="font-['Liberation_Serif',serif] pl-[18px]" lead={<span className="h-[11px] w-[11px] border border-black bg-white" />} />
          <Tools names={['|']} />
          <Combo label="线型" value="ByLayer" width="w-[160px]" text="font-['Liberation_Serif',serif] pl-[69px]" lead={<span className="h-px w-[60px] bg-black" />} />
          <Tools names={['|']} />
          <Combo label="线宽" value="ByLayer" width="w-[126px]" text="font-['Liberation_Serif',serif] pl-[43px]" lead={<span className="h-px w-[35px] bg-black" />} />
          <Tools names={['|']} />
          <Combo label="打印样式" value="ByColor" width="w-[120px]" text="font-['Liberation_Serif',serif] pl-2" disabled />
        </ToolStrip>
      </div>
    </div>
  )
}

function SideBar({ label, names }: { label: string; names: string[] }) {
  return (
    <div role="toolbar" aria-label={label} className="flex w-[25px] flex-col border border-[#333] bg-[#ebebeb]">
      <VGrip />
      {names.map((name) =>
        name === '|' ? (
          <div key={name} className="mx-[2px] my-[2px] h-px bg-[#999]" />
        ) : (
          <button key={name} aria-label={name} className="flex h-[22px] items-center justify-center pr-px"><Icon name={name} /></button>
        )
      )}
    </div>
  )
}

const drawTools = ['line', 'xline', 'pline', 'polygon', 'rect', 'arc', 'circle', 'cloud', 'spline', 'ellipse', 'earc', 'insert', 'mkblock', 'point', 'hatch', 'gradient', 'region', 'table', 'mtext', 'addsel']
const modifyTools = ['erase', 'dup', 'mirror', 'offset', 'array', 'move', 'rotate', 'scale', 'stretch', 'trim', 'extend', 'breakpt', 'brk', 'join', 'chamfer', 'fillet', 'blend', 'explode']
const orderTools = ['front', 'back', 'above', 'under', '|', 'textfront', 'hatchback']

const GRID = 65.12
const gridLines = Array.from({ length: 220 }, (_, i) => i - 4)

function GridLines({ major }: { major: boolean }) {
  return (
    <g fill={major ? '#323a4c' : '#262d37'}>
      {gridLines.filter((i) => (i % 5 === 0) === major).map((i) => {
        const x = Math.round(51 + (i * GRID) / 5)
        const y = Math.round(39.4 + (i * GRID) / 5)
        return (
          <React.Fragment key={i}>
            <rect x={x} y="0" width="1" height="100%" />
            <rect x="0" y={y} width="100%" height="1" />
          </React.Fragment>
        )
      })}
    </g>
  )
}

function Canvas() {
  return (
    <div className="relative flex-1 overflow-hidden bg-[#212830]">
      <svg className="absolute inset-0 h-full w-full" aria-hidden="true">
        <GridLines major={false} />
        <GridLines major />
        <rect x="877.5" y="249.5" width="260" height="236" fill="none" stroke="#fff" />
        <rect x="815.5" y="200.5" width="374" height="349" rx="3" fill="none" stroke="#ff1e10" strokeWidth="4" />
        <path d="M397 400 712 397l-1-4 17 9-17 9 1-4-315-6z" fill="#ff1e10" />
        <path d="m299 516 81 154 42 77 4-2v20l-17-11 5-2-41-82-75-153z" fill="#ff1e10" />
      </svg>
      <div className="absolute left-[3px] top-[4px] font-['Liberation_Sans','Noto_Sans_CJK_SC',sans-serif] text-[13px] leading-[18px] text-[#dcdcdc]">[−][俯视][二维线框]</div>
      <svg className="absolute right-[13px] top-[10px] h-[144px] w-[140px] font-['Noto_Sans_CJK_SC',sans-serif]" viewBox="0 0 140 144">
        <circle cx="70" cy="72" r="53" fill="none" stroke="#434952" strokeWidth="13" />
        <rect x="44" y="46.5" width="51" height="51" fill="#adafb3" stroke="#83868b" />
        <rect x="53" y="56" width="32" height="32" fill="#a0a8b0" />
        <g fill="#b5b7ba" fontSize="18" fontWeight="500" textAnchor="middle">
          <text x="70" y="23">北</text>
          <text x="13" y="79">西</text>
          <text x="126" y="79">东</text>
          <text x="70" y="137">南</text>
        </g>
        <text x="69" y="82" fontSize="29" textAnchor="middle" fill="#5c626a">上</text>
      </svg>
      <button className="absolute right-[59px] top-[170px] flex h-[18px] w-12 items-center justify-center gap-[5px] rounded-[4px] border border-[#8a8c98] bg-[#9a9ca8] pb-[2px] font-['Liberation_Sans',sans-serif] text-[11px] text-[#454852]">
        WCS
        <svg viewBox="0 0 8 5" className="h-[5px] w-2" fill="none" stroke="#ccced6"><path d="M.5.5h7L4 4.5z" /></svg>
      </button>
      <svg className="absolute bottom-[10px] left-[10px] h-[80px] w-[85px]" viewBox="0 0 85 80" fill="none" stroke="#fff">
        <path d="M9.5 22v48h49M5.5 65.5h8v9h-8z" />
        <g fontSize="18" fontWeight="100" fontFamily="Lato, Inter, sans-serif" fill="#fff" stroke="none">
          <text x="12" y="17">Y</text>
          <text x="64" y="69">X</text>
        </g>
      </svg>
    </div>
  )
}

const ScrollArrow = ({ d }: { d: string }) => (
  <svg viewBox="0 0 12 12" className="h-3 w-3" fill="none" stroke="#444" strokeWidth="2" aria-hidden="true"><path d={d} /></svg>
)

function LayoutTabs() {
  const nav = ['M5 5v10M14 5v10L7 10z', 'M12 5v10L5 10z', 'M6 5v10l7-5z', 'M5 5v10l7-5zM14 5v10']
  return (
    <div className="flex h-[21px] border-b-2 border-white bg-[#f0f0f0]">
      {nav.map((d) => (
        <button key={d} aria-label="布局导航" className="w-[18px] border-b border-r border-[#a0a0a0]">
          <svg viewBox="0 0 18 19" className="h-full w-full" fill="#555" stroke="#555"><path d={d} /></svg>
        </button>
      ))}
      <button className="w-14 bg-[#212830] pl-1 text-[15px] leading-[18px] text-white [clip-path:polygon(0_0,100%_0,calc(100%_-_6px)_100%,6px_100%)]">模型</button>
      {['布局1', '布局2'].map((t) => (
        <button key={t} className="relative w-14 border-b border-[#777] text-[15px] leading-[18px] text-black">
          {t}
          <svg viewBox="0 0 8 18" className="absolute -right-1 top-0 h-[18px] w-2" stroke="#666" aria-hidden="true"><path d="m7 0-6 18" /></svg>
        </button>
      ))}
      <div className="flex-1" />
      <div className="flex w-[623px]">
        <div className="w-[6px] bg-[#c4c4c4]" />
        <button aria-label="向左" className="flex w-[22px] items-center justify-center"><svg viewBox="0 0 6 10" className="h-2 w-[5px]" fill="none" stroke="#333" strokeWidth="1.5"><path d="M5 0 1 5l4 5" /></svg></button>
        <div className="flex-[180]" />
        <div className="h-[18px] w-[21px] bg-[#cdcdcd]" />
        <div className="flex-[373]" />
        <button aria-label="向右" className="flex w-[22px] items-center justify-center"><svg viewBox="0 0 6 10" className="h-2 w-[5px]" fill="none" stroke="#333" strokeWidth="1.5"><path d="m1 0 4 5-4 5" /></svg></button>
      </div>
      <div className="w-[22px] border-t border-[#aaa]" />
    </div>
  )
}

function Workspace() {
  return (
    <main className="flex flex-1">
      <div className="w-[29px] shrink-0"><SideBar label="绘图" names={drawTools} /></div>
      <div className="flex min-w-0 flex-1 flex-col pb-[5px]">
        <div className="flex flex-1 border-l-2 border-t-2 border-[#8f8f8f]">
          <Canvas />
          <div className="flex w-[23px] shrink-0 flex-col items-center border-r-[3px] border-l border-l-white border-r-white bg-[#f0f0f0] py-1">
            <button aria-label="向上"><ScrollArrow d="m1 9 5-5 5 5" /></button>
            <div className="flex-[291]" />
            <div className="h-[21px] w-full bg-[#cdcdcd]" />
            <div className="flex-[420]" />
            <button aria-label="向下"><ScrollArrow d="m1 3 5 5 5-5" /></button>
          </div>
        </div>
        <div className="border-l-2 border-[#8f8f8f]"><LayoutTabs /></div>
      </div>
      <div className="flex w-8 shrink-0 flex-col pl-1">
        <SideBar label="修改" names={modifyTools} />
        <SideBar label="绘图次序" names={orderTools} />
      </div>
    </main>
  )
}

const prompt = ['是否基于对齐点缩放对象', '？', '[', '是', '(Y)/', '否', '(N)] <', '否', '>: y']

function promptFont(part: string) {
  if (part === '？') return "font-['Noto_Sans_CJK_TC',sans-serif] text-xl"
  return /[\u4e00-\u9fff]/.test(part) ? 'text-xl' : "font-['Liberation_Mono',monospace] text-lg"
}

function CommandLine() {
  return (
    <section className="relative flex h-14 border-b border-[#333]">
      <div className="flex w-6 shrink-0 flex-col items-center justify-between bg-linear-to-b from-[#999] to-[#484848] pt-1">
        <svg viewBox="0 0 18 8" className="h-2 w-[18px]" stroke="#ccc" strokeDasharray="1 2" aria-hidden="true"><path d="M0 1.5h18M0 6.5h18" /></svg>
        <button aria-label="关闭命令行"><svg viewBox="0 0 10 12" className="h-3 w-[10px]" stroke="#fff" strokeWidth="2"><path d="m1 1 8 10M9 1 1 11" /></svg></button>
        <button aria-label="自定义命令行"><svg viewBox="0 0 12 8" className="h-2 w-3" fill="none" stroke="#ddd" strokeWidth="2"><path d="M4 1c6-1 7 3 4 6M1 7h4" /></svg></button>
      </div>
      <div className="flex flex-1 flex-col pr-[2px]">
        <output className="flex h-7 items-center whitespace-pre border-b border-[#777] bg-[#c6c6c6] pb-[2px] pl-2 leading-6 text-black">
          {prompt.map((part, i) => (
            <span key={i} className={promptFont(part)}>{part}</span>
          ))}
        </output>
        <div className="flex flex-1 items-center bg-white pb-[2px] pl-[10px]">
          <button aria-label="最近使用的命令" className="flex items-center gap-1">
            <svg viewBox="0 0 20 18" className="h-[18px] w-5" fill="none"><rect x=".5" y=".5" width="19" height="17" rx="1" fill="#cdd0d8" stroke="#b4b8c2" /><path d="m4 5 4 4-4 4M10 13.5h5" stroke="#555b6a" strokeWidth="1.5" /></svg>
            <Caret className="text-[#888]" />
          </button>
          <input aria-label="命令" placeholder="键入命令" className="ml-[9px] flex-1 bg-transparent text-xl italic leading-6 outline-none placeholder:text-[#999]" />
        </div>
      </div>
      <div className="pointer-events-none absolute -top-[14px] left-[26px] h-[42px] w-[571px] rounded-md border-4 border-[#ff1e10]" />
    </section>
  )
}

const toggles = ['infer', 'snap', 'grid', 'ortho', 'polar', 'osnap', 'osnap3d', 'otrack', 'ducs', 'dyn', 'lwt', 'transp', 'qp', 'cycle', 'monitor']
const switchedOn = ['grid', 'polar', 'osnap', 'otrack', 'transp']

const cell = 'flex h-full items-center justify-center border-r border-[#777] bg-linear-to-b from-[#cfcfcf] to-[#a8a8a8]'

function StatusBar() {
  return (
    <footer className="flex h-6 items-center border-b-2 border-t border-b-[#463c3c] border-t-[#111] bg-linear-to-b from-[#a0a0a0] to-[#808080]">
      <div className="w-[250px] whitespace-pre pl-3 font-['Liberation_Mono',monospace] text-[13px] text-black">36.8385, 2.7764, 0.0000</div>
      <div className="flex h-full">
        {toggles.map((name) => (
          <button
            key={name}
            aria-label={name}
            aria-pressed={switchedOn.includes(name)}
            className={`flex w-[22px] items-center justify-center border-l border-[#666] bg-linear-to-b ${switchedOn.includes(name) ? 'from-[#d4ebf2] to-[#8fc6d6]' : 'from-[#cfcfcf] to-[#a8a8a8]'}`}
          >
            <Icon name={name} />
          </button>
        ))}
      </div>
      <div className="flex-1" />
      <div className="flex h-full border-l border-[#555] text-black">
        <button className={`${cell} w-9 pt-1 text-sm`}>模型</button>
        <button aria-label="布局" className={`${cell} w-[22px]`}><Icon name="layoutA" /></button>
        <button aria-label="快速查看" className={`${cell} w-[22px]`}><Icon name="layoutB" /></button>
        <div className="w-[22px] border-r border-[#666] bg-[#8a8a8a]" />
        <button className={`${cell} w-[60px] gap-[2px] pr-1 text-sm`}>
          <Icon name="anno" />
          <span className="pt-1">1:1</span>
          <span className="pb-1"><Caret className="text-black" /></span>
        </button>
        <button aria-label="注释可见性" className={`${cell} w-[22px]`}><Icon name="annovis" /></button>
        <button aria-label="自动缩放" className={`${cell} w-[22px]`}><Icon name="annoauto" /></button>
        <div className="w-[5px] border-r border-[#666] bg-[#8a8a8a]" />
        <button aria-label="工作空间设置" className={`${cell} w-[22px]`}><Icon name="gear" /></button>
        <button aria-label="锁定" className={`${cell} w-[22px]`}><Icon name="tray" /></button>
        <button aria-label="硬件加速" className={`${cell} w-[22px]`}><Icon name="ball" className="h-[14px] w-[14px]" /></button>
        <button aria-label="隔离对象" className="flex w-[30px] items-center justify-center border-2 border-[#555] bg-[#a8a8a8]"><Icon name="bulb" /></button>
        <button aria-label="状态栏菜单" className={`${cell} w-[11px]`}>
          <svg viewBox="0 0 6 4" className="h-1 w-[6px]" aria-hidden="true"><path d="M0 0h6L3 4z" /></svg>
        </button>
        <button aria-label="全屏显示" className={`${cell} w-[23px]`}><Icon name="clean" className="h-[14px] w-[14px]" /></button>
        <div className="w-[2px]" />
      </div>
    </footer>
  )
}

function InputMethodBar() {
  return (
    <div className="absolute bottom-[60px] right-0 flex h-[38px] w-[239px] items-center rounded border-2 border-[#c3d6e6] bg-white pl-[3px] text-[#0a68c8]">
      <svg viewBox="0 0 40 38" className="h-[38px] w-10 shrink-0" aria-hidden="true">
        <path d="M2 6 32 1c2 0 3 1 3 2l4 26c0 2-1 3-2 3L12 38c-2 0-4-1-5-3L1 9c0-2 0-3 1-3z" fill="#f5541c" />
        <path d="M31 10C22 6 10 9 10 14s20 4 20 10-13 8-20 4" fill="none" stroke="#fff" strokeWidth="5" />
      </svg>
      <div className="ml-[6px] h-[34px] w-[5px] border-x border-[#f8cdb8]" />
      <div className="flex flex-1 items-center justify-between pl-[7px] pr-[6px]">
        <button className="text-[19px] font-bold leading-none">中</button>
        <button aria-label="标点">
          <svg viewBox="0 0 16 16" className="h-4 w-4" fill="none" stroke="currentColor" strokeWidth="1.5"><circle cx="3.5" cy="4" r="2.3" /><circle cx="12" cy="9.5" r="2" fill="currentColor" /><path d="M13.5 10c0 2-1 3.500-3 4.500" /></svg>
        </button>
        <button aria-label="表情">
          <svg viewBox="0 0 22 22" className="h-[22px] w-[22px]" fill="none" stroke="currentColor" strokeWidth="1.8"><circle cx="11" cy="11" r="9.5" /><path d="M7.5 6.5v3M14.5 6.5v3M5.5 12c1.500 5 9.500 5 11 0" /></svg>
        </button>
        <button aria-label="手写">
          <svg viewBox="0 0 20 20" className="h-5 w-5" fill="none" stroke="currentColor" strokeWidth="2.2"><path d="m6 8 6-6 6 5-7 8zM6 8l5 7-3 3H3l-1-5z" strokeLinejoin="round" /></svg>
        </button>
        <button aria-label="语音">
          <svg viewBox="0 0 16 20" className="h-5 w-4" fill="none" stroke="currentColor" strokeWidth="2"><rect x="5" y="1" width="6" height="10" rx="3" fill="currentColor" /><path d="M1.5 8c0 8 13 8 13 0M8 14v4M4 19h8" /></svg>
        </button>
        <button aria-label="工具箱">
          <svg viewBox="0 0 17 17" className="h-[17px] w-[17px]" fill="currentColor"><path d="M0 0h8v8H0zM0 9h8v8H0zM9 9h8v8H9z" /><path d="M10 1h6v6h-6z" fill="none" stroke="currentColor" strokeWidth="1.5" /></svg>
        </button>
      </div>
    </div>
  )
}

function Watermark() {
  return (
    <svg viewBox="0 0 350 175" className="pointer-events-none absolute bottom-[32px] right-[100px] h-[175px] w-[350px] overflow-visible drop-shadow-[0_0_2px_rgba(0,0,0,0.35)]">
      <g fill="#fff" opacity=".72">
        <text x="2" y="109" fontSize="76" fontWeight="bold" fontFamily="Liberation Sans, sans-serif" stroke="#fff" strokeWidth="1">Bai</text>
        <ellipse cx="135" cy="45" rx="12.5" ry="16.5" />
        <ellipse cx="159" cy="21" rx="12" ry="17" />
        <ellipse cx="190" cy="23" rx="12.5" ry="16.5" transform="rotate(12 190 23)" />
        <ellipse cx="209" cy="52" rx="12.5" ry="16" />
        <path d="M172 48c10 0 16 7 21 15 7 10 21 15 21 30 0 13-8 19-18 18-10 0-14-2-24-2s-15 2-25 1c-12 0-18-6-18-18s11-16 20-27c7-9 12-17 23-17z" />
        <text x="225" y="104" fontSize="58" fontWeight="bold" fontFamily="Noto Sans CJK SC, sans-serif" stroke="#fff" strokeWidth="2">经验</text>
        <text x="5" y="154" fontSize="40" fontFamily="Open Sans, sans-serif">jingyan.baidu.com</text>
      </g>
      <text x="142" y="97" fontSize="44" fontWeight="bold" fill="#2a3038" fontFamily="Liberation Sans, sans-serif">du</text>
    </svg>
  )
}

export default function App() {
  return (
    <div className="relative flex min-h-screen flex-col overflow-hidden bg-[#686868] font-['Open_Sans','Noto_Sans_CJK_SC',sans-serif]">
      <TitleBar />
      <MenuBar />
      <button aria-label="应用程序菜单" className="absolute left-0 top-0 z-20 flex h-[41px] w-[41px] items-center justify-between border border-black bg-linear-to-b from-[#b0b0b0] to-[#6f6f6f] px-[2px]">
        <svg viewBox="0 0 26 28" className="h-7 w-[26px]" aria-hidden="true">
          <path d="M12 1 1 26c4-1 7-3 8-6l4-10z" fill="#d8321c" />
          <path d="m12 1 4 4 8 21c-4 0-7-2-8-5l-3-11z" fill="#a81c10" />
          <path d="M9 20c3-3 7-2 8 1l-4-11z" fill="#7c120a" />
          <path d="m12 1 1 9-4 10L5 17z" fill="#ee5a3a" />
        </svg>
        <Caret className="text-[#2c3440]" />
      </button>
      <FileTabs />
      <Toolbars />
      <Workspace />
      <CommandLine />
      <StatusBar />
      <InputMethodBar />
      <Watermark />
    </div>
  )
}
